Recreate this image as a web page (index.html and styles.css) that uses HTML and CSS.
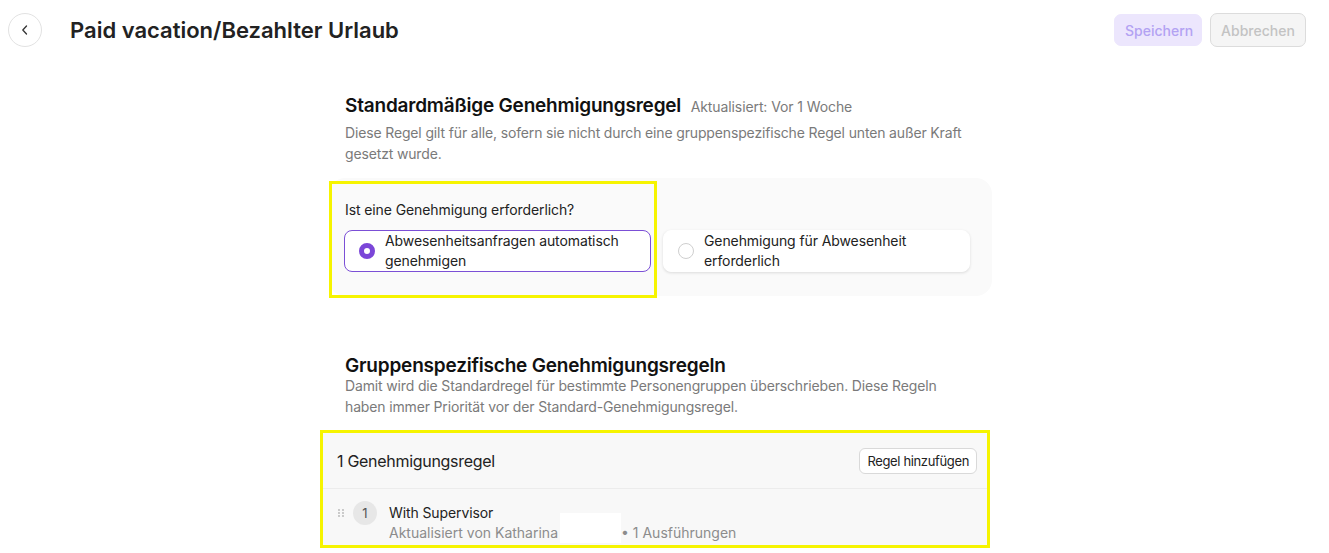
FILE: index.html
```html
<!DOCTYPE html>
<html lang="de">
<head>
<meta charset="utf-8">
<title>Paid vacation/Bezahlter Urlaub</title>
<link rel="stylesheet" href="styles.css">
</head>
<body>
<header class="topbar">
  <button class="back" aria-label="Zurück">
    <svg width="12" height="12" viewBox="0 0 12 12"><path d="M7.5 2 L3.8 6 L7.5 10" fill="none" stroke="#333" stroke-width="1.3" stroke-linecap="round" stroke-linejoin="round"/></svg>
  </button>
  <h1 class="title">Paid vacation/Bezahlter Urlaub</h1>
  <div class="actions">
    <button class="btn btn-save">Speichern</button>
    <button class="btn btn-cancel">Abbrechen</button>
  </div>
</header>

<main class="main">
  <section class="section">
    <h2 class="h2">Standardmäßige Genehmigungsregel <span class="meta">Aktualisiert: Vor 1 Woche</span></h2>
    <p class="desc">Diese Regel gilt für alle, sofern sie nicht durch eine gruppenspezifische Regel unten außer Kraft gesetzt wurde.</p>

    <div class="panel">
      <div class="highlight hl-1"></div>
      <div class="question">Ist eine Genehmigung erforderlich?</div>
      <div class="options">
        <label class="option selected">
          <span class="radio on"></span>
          <span class="opt-text">Abwesenheitsanfragen automatisch genehmigen</span>
        </label>
        <label class="option">
          <span class="radio"></span>
          <span class="opt-text">Genehmigung für Abwesenheit erforderlich</span>
        </label>
      </div>
    </div>
  </section>

  <section class="section section-2">
    <h2 class="h2">Gruppenspezifische Genehmigungsregeln</h2>
    <p class="desc desc-2">Damit wird die Standardregel für bestimmte Personengruppen überschrieben. Diese Regeln haben immer Priorität vor der Standard-Genehmigungsregel.</p>

    <div class="card">
      <div class="highlight hl-2"></div>
      <div class="card-head">
        <span class="card-title">1 Genehmigungsregel</span>
        <button class="btn-add">Regel hinzufügen</button>
      </div>
      <div class="rule">
        <svg class="grip" width="8" height="10" viewBox="0 0 8 10">
          <circle cx="2" cy="2" r="0.9" fill="#b5b5b5"/><circle cx="6" cy="2" r="0.9" fill="#b5b5b5"/>
          <circle cx="2" cy="5" r="0.9" fill="#b5b5b5"/><circle cx="6" cy="5" r="0.9" fill="#b5b5b5"/>
          <circle cx="2" cy="8" r="0.9" fill="#b5b5b5"/><circle cx="6" cy="8" r="0.9" fill="#b5b5b5"/>
        </svg>
        <span class="num">1</span>
        <div class="rule-body">
          <div class="rule-name">With Supervisor</div>
          <div class="rule-meta">Aktualisiert von Katharina<span class="redact"></span>• 1 Ausführungen</div>
        </div>
      </div>
    </div>
  </section>
</main>
</body>
</html>
```

FILE: styles.css
```css
* { box-sizing: border-box; }
html, body { margin: 0; padding: 0; background: #ffffff; }
body {
  font-family: Inter, "Noto Sans", "Liberation Sans", sans-serif;
  color: #1f1f1f;
  width: 1329px;
  height: 553px;
  overflow: hidden;
}
button { font-family: inherit; cursor: pointer; }

.topbar {
  display: flex;
  align-items: center;
  height: 60px;
  padding: 0 23px 0 8px;
}
.back {
  width: 34px;
  height: 34px;
  border-radius: 50%;
  border: 1px solid #e2e2e2;
  background: #fff;
  display: flex;
  align-items: center;
  justify-content: center;
  padding: 0;
}
.title {
  margin: 0 0 0 28px;
  font-size: 22px;
  font-weight: 600;
  letter-spacing: 0;
  color: #222;
}
.actions { margin-left: auto; display: flex; gap: 8px; align-items: center; }
.btn {
  height: 32px;
  border-radius: 7px;
  font-size: 14px;
  font-weight: 500;
  padding: 0 10px;
}
.btn-save {
  background: #ece6fd;
  border: 1px solid #ece6fd;
  color: #b3a2f3;
  width: 88px;
}
.btn-cancel {
  background: #f5f5f5;
  border: 1px solid #dcdcdc;
  color: #c3c3c3;
  width: 96px;
  height: 34px;
}

.main {
  width: 671px;
  margin: 0 auto;
  padding-right: 8px;
}
.section { padding-top: 33px; }
.section-2 { padding-top: 57px; }
.h2 {
  margin: 0 0 0 16px;
  font-size: 19px;
  font-weight: 600;
  letter-spacing: -0.2px;
  color: #111;
  line-height: 26px;
}
.meta {
  font-size: 14px;
  font-weight: 400;
  color: #7a7a7a;
  letter-spacing: -0.1px;
  margin-left: 5px;
}
.desc {
  margin: 2px 0 0 16px;
  font-size: 14px;
  line-height: 21px;
  color: #7a7a7a;
  letter-spacing: -0.15px;
  max-width: 625px;
}
.desc-2 { margin-top: -4px; }

.panel {
  position: relative;
  margin-top: 14px;
  background: #fafafa;
  border-radius: 16px;
  padding: 22px 16px 24px;
}
.question {
  font-size: 14px;
  line-height: 20px;
  color: #222;
  letter-spacing: -0.1px;
}
.options {
  display: grid;
  grid-template-columns: 307px 307px;
  gap: 12px;
  margin-top: 10px;
  margin-left: -1px;
}
.option {
  display: flex;
  align-items: center;
  gap: 10px;
  height: 42px;
  padding: 0 12px 0 14px;
  border-radius: 8px;
  background: #fff;
  border: 1px solid #ffffff;
  box-shadow: 0 1px 3px rgba(0,0,0,0.12);
}
.option.selected {
  border-color: #7b4fd6;
  box-shadow: none;
}
.radio {
  width: 16px;
  height: 16px;
  border-radius: 50%;
  border: 1px solid #cfcfcf;
  flex: none;
  background: #fff;
}
.radio.on {
  border: 5px solid #7b46d8;
}
.opt-text {
  font-size: 14px;
  line-height: 20px;
  color: #222;
  letter-spacing: -0.1px;
}

.highlight {
  position: absolute;
  border: 3px solid #f6f400;
  pointer-events: none;
}
.hl-1 { left: 0; top: 3px; width: 328px; height: 117px; }
.hl-2 { left: -3px; top: -3px; right: -3px; bottom: -3px; }

.card {
  position: relative;
  margin-top: 16px;
  margin-left: -6px;
  width: 664px;
  background: #f8f8f8;
}
.card-head {
  display: flex;
  align-items: center;
  justify-content: space-between;
  height: 56px;
  padding: 0 10px 0 14px;
  border-bottom: 1px solid #ececec;
}
.card-title {
  font-size: 16px;
  color: #222;
  letter-spacing: -0.3px;
}
.btn-add {
  height: 26px;
  padding: 0 7px;
  background: #fff;
  border: 1px solid #d9d9d9;
  border-radius: 6px;
  font-size: 13px;
  color: #222;
  letter-spacing: -0.35px;
}
.rule {
  display: flex;
  align-items: flex-start;
  padding: 12px 14px 2px 14px;
}
.grip { margin-top: 7px; flex: none; }
.num {
  width: 24px;
  height: 24px;
  margin-left: 8px;
  border-radius: 50%;
  background: #e7e7e7;
  color: #555;
  font-size: 13px;
  display: flex;
  align-items: center;
  justify-content: center;
  flex: none;
}
.rule-body { margin-left: 12px; }
.rule-name {
  font-size: 14px;
  line-height: 20px;
  color: #222;
  letter-spacing: -0.1px;
  margin-top: 2px;
}
.rule-meta {
  font-size: 14px;
  line-height: 20px;
  color: #8c8c8c;
  letter-spacing: 0;
  display: flex;
  align-items: center;
}
.redact {
  display: inline-block;
  width: 61px;
  height: 30px;
  background: #fff;
  margin: -10px 0 0 2px;
  align-self: flex-start;
}
```
